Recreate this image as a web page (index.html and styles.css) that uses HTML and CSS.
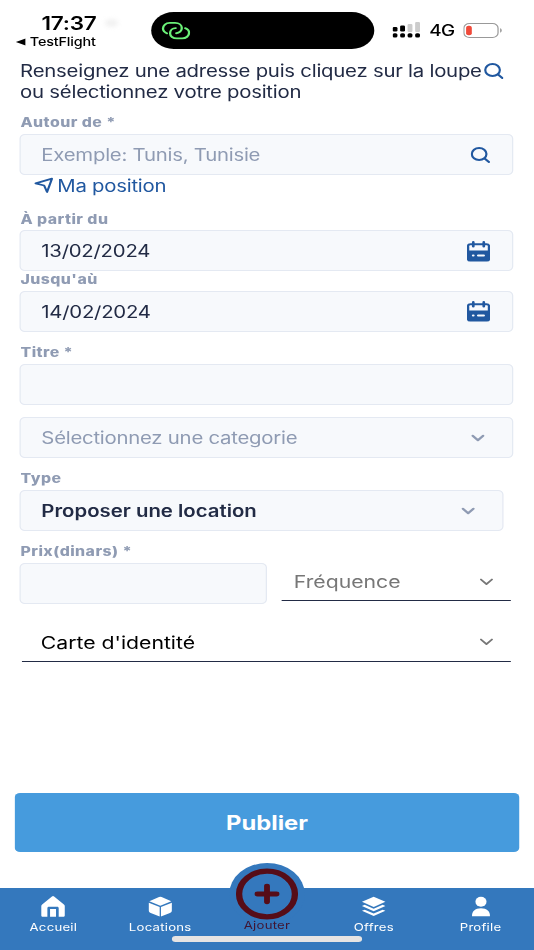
FILE: index.html
```html
<!DOCTYPE html>
<html lang="fr">
<head>
<meta charset="utf-8">
<title>Publier une annonce</title>
<link rel="stylesheet" href="styles.css">
</head>
<body>
<div class="screen">
  <header class="status">
    <div class="status-left">
      <div class="clock">17:37<i class="smudge"></i></div>
      <div class="back"><svg width="8" height="8" viewBox="0 0 8 8"><path d="M0 4 8 .4v7.2z" fill="#000"/></svg><span>TestFlight</span></div>
    </div>
    <div class="island">
      <svg width="24" height="20" viewBox="0 0 24 20" fill="none" stroke="#6bf178" stroke-width="1.9" stroke-linecap="round"><path d="M4.900 12.300C2.800 11.400 1.700 9.700 1.700 7.600c0-3.200 2.300-5.700 5.500-5.700h4.400c3.200 0 5.500 2.100 5.500 5.100s-2 5.200-4.500 5.200"/><path d="M19.900 7.200c2.100.9 3.200 2.500 3.200 4.500 0 3.200-2.400 5.700-5.700 5.700h-4.300c-3.300 0-5.600-2.100-5.600-5.100s2-5.200 4.600-5.200"/></svg>
    </div>
    <div class="status-right">
      <svg class="signal" width="23" height="16" viewBox="0 0 23 16"><g fill="#ccc"><rect x="12.300" y="2" width="4" height="8" rx="1"/><rect x="18.500" y="0" width="4" height="10" rx="1"/></g><rect x="0" y="5" width="4" height="4.500" rx="1.200"/><rect x="6.200" y="3.500" width="4" height="6" rx="1.200"/><rect x="0" y="11.200" width="4" height="4.200" rx="1.500"/><rect x="6.200" y="11.200" width="4" height="4.200" rx="1.500"/><rect x="12.300" y="11.200" width="4" height="4.200" rx="1.500"/><rect x="18.500" y="11.200" width="4" height="4.200" rx="1.500"/></svg>
      <span class="network">4G</span>
      <svg class="battery" width="33" height="15" viewBox="0 0 33 15"><rect x=".5" y=".5" width="28" height="14" rx="4.500" fill="#fff" stroke="#999"/><rect x="2.300" y="2.700" width="4.700" height="9.600" rx="2" fill="#f04a3a"/><path d="M30.200 5.300c1.800.6 1.800 3.800 0 4.400z" fill="#999"/></svg>
    </div>
  </header>

  <main class="form">
    <p class="intro">Renseignez une adresse puis cliquez sur la loupe<svg class="loupe" width="16" height="16" viewBox="0 0 16 16"><circle cx="7" cy="7" r="6"/><path d="m11.500 11.500 3.500 3.500"/></svg><br>ou sélectionnez votre position</p>

    <label class="label">Autour de *</label>
    <div class="field muted"><span>Exemple: Tunis, Tunisie</span><svg class="loupe" width="16" height="16" viewBox="0 0 16 16"><circle cx="7" cy="7" r="6"/><path d="m11.500 11.500 3.500 3.500"/></svg></div>
    <div class="locate"><svg width="16" height="16" viewBox="0 0 16 16" fill="none" stroke="#2158a0" stroke-width="1.800" stroke-linejoin="round"><path d="M1.200 6.300 14.600 1.700 10.600 15 8.200 8.500z"/></svg><span>Ma position</span></div>

    <label class="label">À partir du</label>
    <div class="field"><span>13/02/2024</span><svg class="calendar" width="19" height="21" viewBox="0 0 19 21"><path d="M3 2.200h13a3 3 0 0 1 3 3V18a2.600 2.600 0 0 1-2.600 2.600H2.600A2.600 2.600 0 0 1 0 18V5.200a3 3 0 0 1 3-3z" fill="#2158a0"/><path d="M1.900 9.400V5.200c0-.6.400-1 1-1h13.200c.6 0 1 .4 1 1v4.200z" fill="#f7f9fd"/><path d="M5.200 1.200v4.200M13.800 1.200v4.200" stroke="#2158a0" stroke-width="2.200" stroke-linecap="round"/><path d="M5 14.500h.3M9.200 14.500h4.600" stroke="#f7f9fd" stroke-width="2" stroke-linecap="round"/></svg></div>
    <label class="label tight">Jusqu'aù</label>
    <div class="field"><span>14/02/2024</span><svg class="calendar" width="19" height="21" viewBox="0 0 19 21"><path d="M3 2.200h13a3 3 0 0 1 3 3V18a2.600 2.600 0 0 1-2.600 2.600H2.600A2.600 2.600 0 0 1 0 18V5.200a3 3 0 0 1 3-3z" fill="#2158a0"/><path d="M1.900 9.400V5.200c0-.6.400-1 1-1h13.200c.6 0 1 .4 1 1v4.200z" fill="#f7f9fd"/><path d="M5.200 1.200v4.200M13.800 1.200v4.200" stroke="#2158a0" stroke-width="2.200" stroke-linecap="round"/><path d="M5 14.500h.3M9.200 14.500h4.600" stroke="#f7f9fd" stroke-width="2" stroke-linecap="round"/></svg></div>

    <label class="label">Titre *</label>
    <div class="field"></div>
    <div class="field muted category"><span>Sélectionnez une categorie</span><svg class="chevron" width="12" height="8" viewBox="0 0 12 8"><path d="M1.700 1.700 6 6.200l4.300-4.500"/></svg></div>

    <label class="label">Type</label>
    <div class="field type"><span>Proposer une location</span><svg class="chevron" width="12" height="8" viewBox="0 0 12 8"><path d="M1.700 1.700 6 6.200l4.300-4.500"/></svg></div>

    <label class="label">Prix(dinars) *</label>
    <div class="price-row">
      <div class="field price"></div>
      <div class="select frequency"><span>Fréquence</span><svg class="chevron" width="12" height="8" viewBox="0 0 12 8"><path d="M1.500 1.500 6 6.200l4.500-4.700"/></svg></div>
    </div>
    <div class="select identity"><span>Carte d'identité</span><svg class="chevron" width="12" height="8" viewBox="0 0 12 8"><path d="M1.500 1.500 6 6.200l4.500-4.700"/></svg></div>
  </main>

  <button class="publish">Publier</button>

  <nav class="tabs">
    <div class="tab"><svg viewBox="0 0 24 24" preserveAspectRatio="none" fill="#fff"><path d="M11 1.500a1.500 1.500 0 0 1 2 0l9.200 8.300c.6.500.8 1 .8 1.700v9.800c0 .9-.6 1.500-1.400 1.500h-4.300v-9.200c0-.8-.6-1.400-1.400-1.400H8.100c-.8 0-1.400.6-1.400 1.400v9.200H2.400c-.8 0-1.400-.6-1.400-1.500v-9.800c0-.7.300-1.200.8-1.700z"/><path d="M9.200 14.600h5.600v8.200H9.200z"/></svg><span>Accueil</span></div>
    <div class="tab"><svg viewBox="0 0 24 24" preserveAspectRatio="none" fill="#fff"><path d="M1.700 6.400 10.800 2.200a2.800 2.800 0 0 1 2.400 0l9.100 4.200L12 11.200zM1.200 8l10.200 4.600V22.400l-8.400-3.700c-1.300-.6-1.800-1.300-1.800-2.600zM22.800 8l-10.200 4.600V22.400l8.400-3.700c1.300-.6 1.800-1.300 1.800-2.600z"/></svg><span>Locations</span></div>
    <div class="tab add"><div class="bump"><svg width="52" height="52" viewBox="0 0 52 52" fill="none" stroke="#560d18"><circle cx="26" cy="26" r="22.900" stroke-width="5.200"/><path d="M26 18.200v15.600M18.200 26h15.600" stroke-width="4.800" stroke-linecap="round"/></svg></div><span>Ajouter</span></div>
    <div class="tab"><svg viewBox="0 0 24 24" preserveAspectRatio="none" fill="#fff"><path d="M12 1.800 23 7.100 12 12.500 1 7.100z"/><path d="m1 11.500 2.600-1.200L12 14.400l8.400-4.100 2.600 1.200-11 5.500z"/><path d="m1 16.500 2.600-1.200 8.400 4.100 8.400-4.100 2.600 1.200-11 5.500z"/></svg><span>Offres</span></div>
    <div class="tab"><svg viewBox="0 0 24 24" preserveAspectRatio="none" fill="#fff"><circle cx="12" cy="7" r="5.200"/><path d="M3.600 22.200c-.3-5.300 2.900-8.500 8.400-8.500s8.700 3.200 8.400 8.500z"/></svg><span>Profile</span></div>
    <div class="home-bar"></div>
  </nav>
</div>
</body>
</html>
```
FILE: styles.css
```css
* { box-sizing: border-box; }
body { margin: 0; width: 534px; height: 950px; overflow: hidden; background: #fff; }
svg { display: block; flex: none; }

/* Layout is drawn 438px wide and stretched to the window width */
.screen {
  width: 438px; height: 950px;
  display: flex; flex-direction: column;
  transform: scaleX(1.21918); transform-origin: 0 0;
  font-family: Inter, "Liberation Sans", sans-serif;
  color: #222b45; white-space: nowrap;
}

.status { height: 61px; flex: none; display: flex; color: #000; }
.status-left { width: 123.500px; padding: 11.500px 0 0 13px; }
.clock { display: flex; align-items: center; padding-left: 21px; font-size: 18.500px; line-height: 22px; font-weight: 600; letter-spacing: -.200px; }
.smudge { width: 11px; height: 8px; margin-left: 7px; border-radius: 50%; background: #f1f1f1; filter: blur(2px); }
.back { display: flex; align-items: center; gap: 3.500px; font-size: 11.800px; line-height: 17px; font-weight: 500; letter-spacing: -.150px; }
.island { width: 183px; height: 37.500px; margin-top: 11.500px; padding: 9px 8px; background: #000; border-radius: 19px; }
.status-right { display: flex; align-items: center; height: 38px; margin-top: 11px; padding-left: 15.500px; }
.network { margin-left: 7px; width: 20px; font-size: 15.500px; font-weight: 500; letter-spacing: -.400px; }
.battery { margin-left: 7.500px; }

.form { flex: 1; padding: 0 16px 0 16.500px; display: flex; flex-direction: column; }
.intro { margin: 0 0 12px; font-size: 16.700px; line-height: 20.500px; height: 41px; letter-spacing: -.195px; }
.loupe { fill: none; stroke: #2158a0; stroke-width: 1.800; stroke-linecap: round; }
.intro .loupe { display: inline-block; vertical-align: -2px; margin-left: 2px; }
.label { height: 16px; flex: none; margin-bottom: 4px; padding-top: .400px; padding-left: .300px; font-size: 13px; line-height: 16px; font-weight: 800; letter-spacing: .360px; color: #8f9bb3; }
.field {
  height: 40.600px; flex: none; width: 404.800px; margin-left: -.100px; padding: 1px 18.500px 0 16.500px;
  display: flex; align-items: center; justify-content: space-between;
  border: 1px solid #e4e9f2; border-radius: 4.500px; background: #f7f9fc;
  font-size: 16.700px; letter-spacing: -.200px;
}
.muted { color: #8f9bb3; }
.field + .label { margin-top: 12.400px; }
.field + .label.tight { margin-top: 0; }
.locate { height: 35.900px; padding: 2px 0 0 11.500px; display: flex; gap: 3px; font-size: 16.700px; line-height: 18px; letter-spacing: -.200px; color: #2158a0; }
.chevron { fill: none; stroke: #8f9bb3; stroke-width: 2; stroke-linecap: round; stroke-linejoin: round; }
.category { margin-top: 12.400px; padding-right: 22.500px; }
.type { width: 396.800px; padding-right: 22.500px; font-weight: 600; letter-spacing: 0; }
.price-row { display: flex; gap: 12px; }
.price { width: 202.600px; }
.select { height: 38px; flex: none; display: flex; align-items: center; justify-content: space-between; border-bottom: 1px solid #222b45; font-size: 17.400px; }
.select .chevron { stroke: #777; stroke-width: 1.700; }
.frequency { width: 188px; padding: 0 14px 0 10px; color: #777; }
.identity { margin: 19.900px 0 0 1.700px; width: 401px; padding: 0 14px 0 15.300px; color: #000; }

.publish {
  height: 59px; flex: none; margin: 0 12.300px 36.500px; padding: 1px 0 0;
  border: 0; border-radius: 4.500px; background: #469bdd; color: #fff;
  font: 700 19.500px Inter, "Liberation Sans", sans-serif;
}

.tabs { position: relative; height: 62px; flex: none; display: flex; background: #3478bd; color: #fff; }
.tab { flex: 1 1 0; display: flex; flex-direction: column; align-items: center; padding-top: 6.800px; font-size: 10.800px; line-height: 16px; letter-spacing: .200px; }
.tab > svg { width: 21px; height: 23px; margin-bottom: 2.200px; }
.add { color: #401532; padding-top: 30.200px; position: relative; }
.add span { position: relative; }
.bump { position: absolute; left: 50%; top: -25px; width: 62px; height: 62px; margin-left: -31px; padding: 5px; border-radius: 50%; background: #3478bd; }
.home-bar { position: absolute; left: 141px; top: 48.200px; width: 156px; height: 5.500px; border-radius: 3px; background: #e6e4e3; }
```
